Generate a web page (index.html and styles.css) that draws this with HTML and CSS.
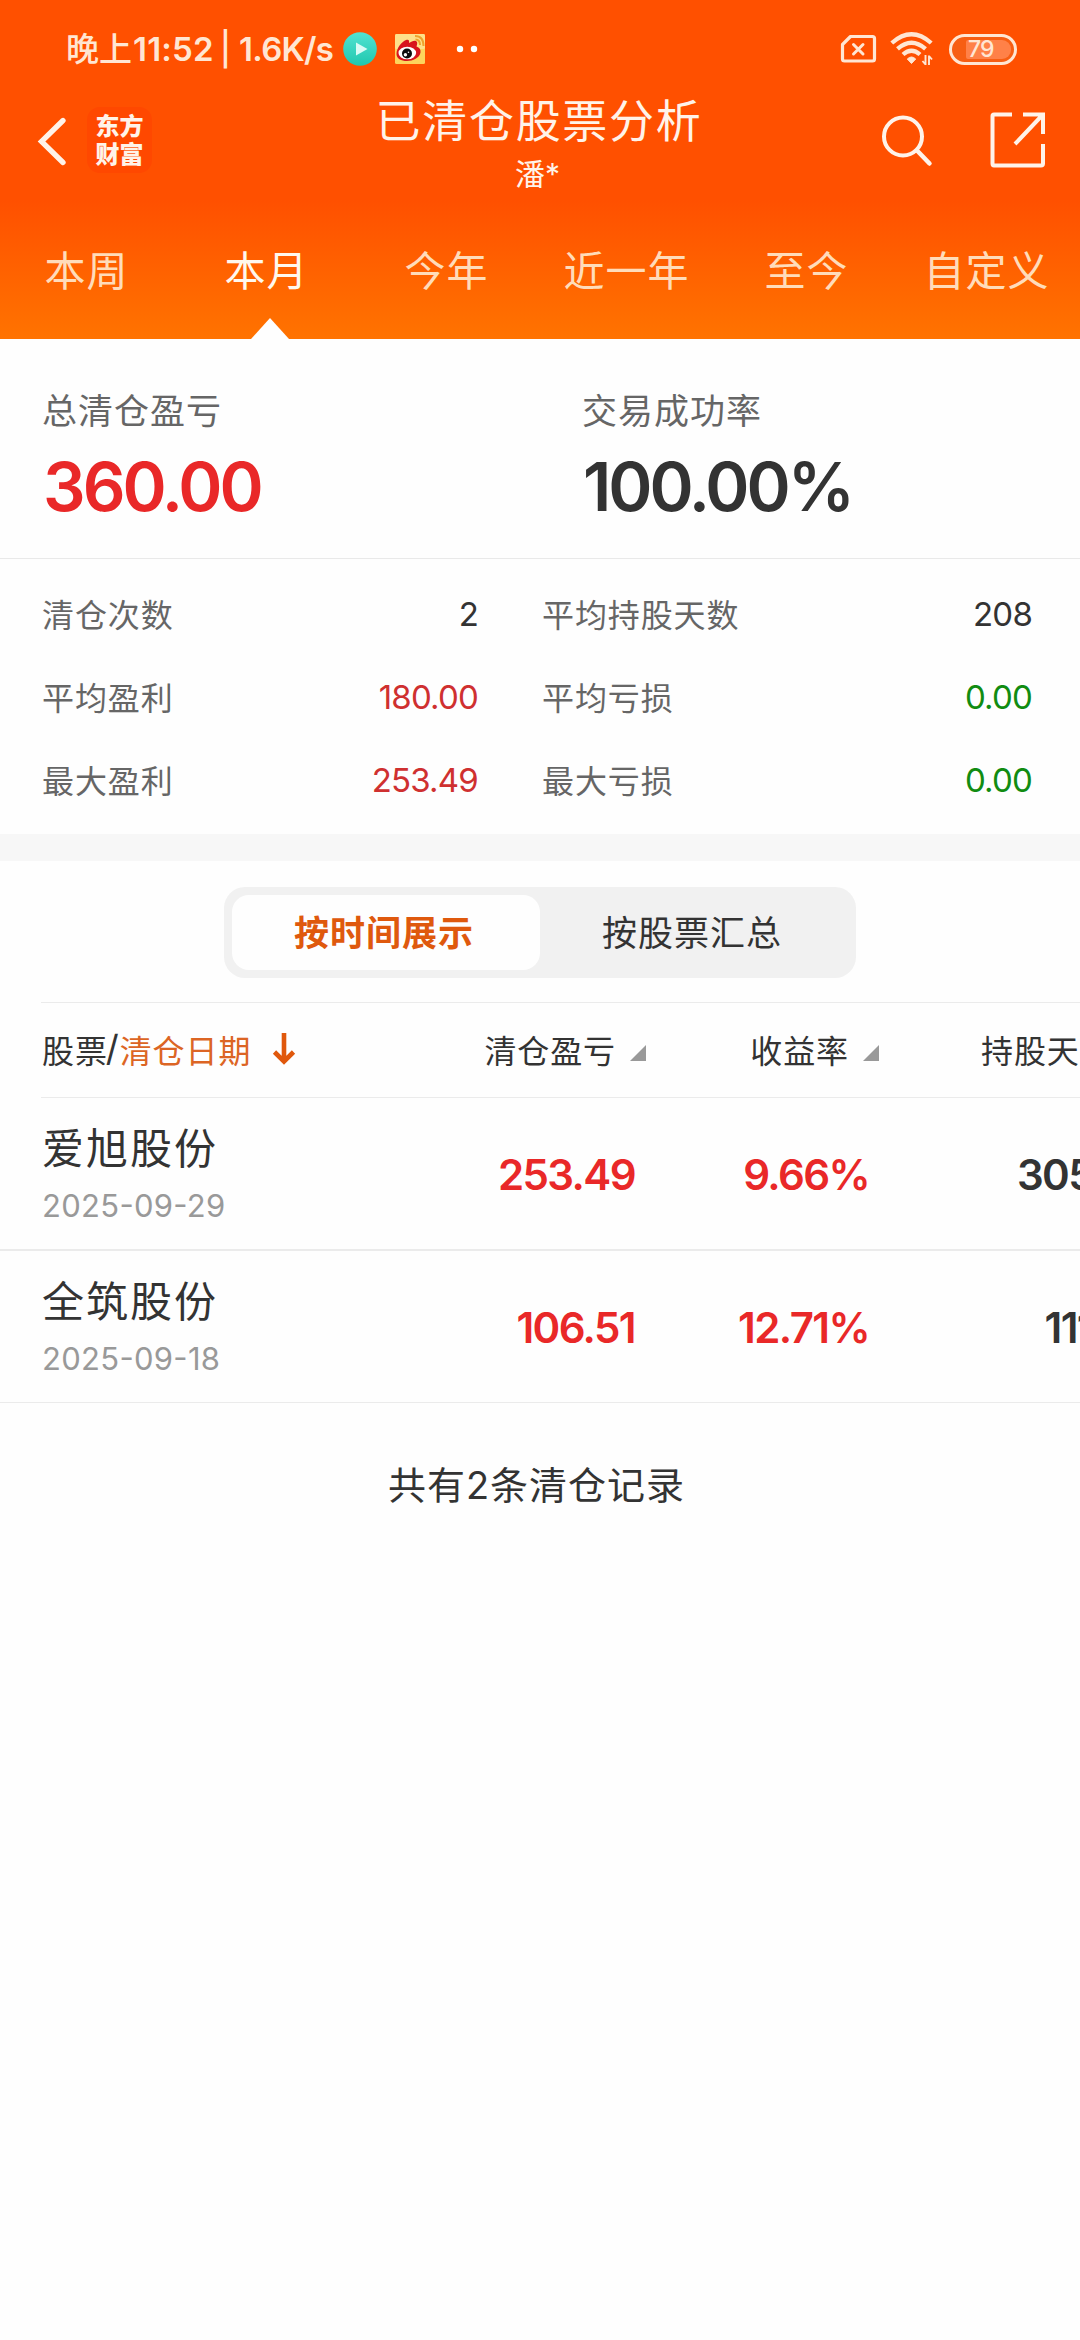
FILE: index.html
```html
<!DOCTYPE html>
<html lang="zh-CN">
<head>
<meta charset="utf-8">
<title>已清仓股票分析</title>
<link rel="stylesheet" href="styles.css">
</head>
<body>
<header class="header">
  <div class="status">
    <span class="status-text">晚上<b class="clock">11:52</b><b class="bar">|</b><b class="speed">1.6K/s</b></span>
    <svg class="play" width="34" height="34" viewBox="0 0 34 34"><defs><linearGradient id="pg" x1="0" y1="0" x2="0" y2="1"><stop offset="0" stop-color="#52e3d2"/><stop offset="1" stop-color="#1fc7ae"/></linearGradient></defs><circle cx="17" cy="17" r="16.8" fill="url(#pg)"/><path d="M13 10.500L24.500 17L13 23.500Z" fill="#d9fbf5"/></svg>
    <svg class="weibo" width="30" height="30" viewBox="0 0 30 30"><rect width="30" height="30" rx="1.500" fill="#fdd45c"/><rect width="30" height="15" rx="1.500" fill="#fee08a"/><path d="M1.500 20C1.500 14 7 7.500 11 6C13.500 5 14.500 6 14 9C17 7 20.500 5.500 22 8C22.500 9 22 11 21.500 12.500C24.500 13.500 26 15.500 25.500 18.500C24.500 24 18 27 12 27C6 27 1.500 24.500 1.500 20Z" fill="#d8141d"/><ellipse cx="12.300" cy="19" rx="8.800" ry="6.300" fill="#fff"/><circle cx="12" cy="19.500" r="5" fill="#0d0d0d"/><circle cx="10.400" cy="20.800" r="1.700" fill="#fff"/><circle cx="13.500" cy="18.300" r=".8" fill="#fff"/><path d="M20.500 5.500Q25 5.500 25 11M20 2Q28.500 2 28.500 12" fill="none" stroke="#eea22c" stroke-width="2"/></svg>
    <svg class="dots" width="22" height="8" viewBox="0 0 22 8"><circle cx="4" cy="4" r="3.200" fill="#fff"/><circle cx="18" cy="4" r="3.200" fill="#fff"/></svg>
    <svg class="sim" width="37" height="30" viewBox="0 0 37 30"><path d="M10.500 2.500H32.500Q34.500 2.500 34.500 4.500V25Q34.500 27 32.500 27H4.500Q2.500 27 2.500 25V10.500Z" fill="none" stroke="#ffe6d3" stroke-width="3.200" stroke-linejoin="round"/><path d="M13.500 10.500L23 20M23 10.500L13.500 20" stroke="#ffe6d3" stroke-width="3" stroke-linecap="round"/></svg>
    <svg class="wifi" width="44" height="34" viewBox="0 0 44 34"><g fill="none" stroke="#ffe6d3" stroke-width="4.300"><path d="M1.800 11Q21.500-6.500 41.200 11"/><path d="M7.500 16.800Q21.500 4.500 35.500 16.800"/><path d="M13 22.500Q21.500 15 30 22.500"/></g><path d="M17.300 27Q21.500 23 25.700 27L21.500 31.500Z" fill="#ffe6d3" stroke="#ffe6d3" stroke-linejoin="round"/><path d="M35.500 23V33M32.500 29L35.500 32.500M39 33V23.500M39 24L42 27.500" fill="none" stroke="#ffe6d3" stroke-width="1.900"/></svg>
    <span class="battery"><span class="charge">79</span></span>
  </div>
  <div class="titlebar">
    <svg class="back" width="30" height="50" viewBox="0 0 30 50"><path d="M26 4.500L4.500 25.500L26 46.500" fill="none" stroke="#fff3e9" stroke-width="5.300" stroke-linecap="round"/></svg>
    <div class="logo">东方<br>财富</div>
    <div class="heading"><h1>已清仓股票分析</h1><p>潘*</p></div>
    <svg class="search" width="52" height="54" viewBox="0 0 52 54"><circle cx="22" cy="22.500" r="19" fill="none" stroke="#fff3e9" stroke-width="4"/><path d="M36 36.500L48.500 49.500" stroke="#fff3e9" stroke-width="4.500" stroke-linecap="round"/></svg>
    <svg class="share" width="56" height="56" viewBox="0 0 56 56"><path d="M22 2.500H4Q2.500 2.500 2.500 4V51.500Q2.500 53.500 4 53.500H51Q53 53.500 53 51.500V32M33 2.500H53V22M52 3.500L25 32" fill="none" stroke="#fff3e9" stroke-width="4"/></svg>
  </div>
  <nav class="tabs"><a>本周</a><a class="active">本月</a><a>今年</a><a>近一年</a><a>至今</a><a>自定义</a></nav>
</header>
<main>
  <section class="summary">
    <div><p>总清仓盈亏</p><strong class="red">360.00</strong></div>
    <div><p>交易成功率</p><strong>100.00%</strong></div>
  </section>
  <section class="stats">
    <dl><dt>清仓次数</dt><dd>2</dd></dl><dl><dt>平均持股天数</dt><dd>208</dd></dl>
    <dl><dt>平均盈利</dt><dd class="loss">180.00</dd></dl><dl><dt>平均亏损</dt><dd class="green">0.00</dd></dl>
    <dl><dt>最大盈利</dt><dd class="loss">253.49</dd></dl><dl><dt>最大亏损</dt><dd class="green">0.00</dd></dl>
  </section>
  <div class="segmented"><span class="selected">按时间展示</span><span>按股票汇总</span></div>
  <section class="records">
    <div class="row head">
      <div class="first">股票<i>/</i><em>清仓日期</em><svg width="24" height="34" viewBox="0 0 24 34"><path d="M12 1V29M2.500 20L12 29.500L21.500 20" fill="none" stroke="#e0580c" stroke-width="4.600"/></svg></div>
      <div class="col">清仓盈亏<svg width="16" height="16" viewBox="0 0 16 16"><path d="M16 0V16H0Z" fill="#999"/></svg></div>
      <div class="col">收益率<svg width="16" height="16" viewBox="0 0 16 16"><path d="M16 0V16H0Z" fill="#999"/></svg></div>
      <div class="col days">持股天数</div>
    </div>
    <div class="row item">
      <div class="first"><h2>爱旭股份</h2><time>2025-09-29</time></div>
      <div class="col red">253.49</div><div class="col red">9.66%</div><div class="col">305</div>
    </div>
    <div class="row item">
      <div class="first"><h2>全筑股份</h2><time>2025-09-18</time></div>
      <div class="col red">106.51</div><div class="col red">12.71%</div><div class="col">111</div>
    </div>
  </section>
  <p class="total">共有<span>2</span>条清仓记录</p>
</main>
</body>
</html>
```
FILE: styles.css
```css
* { box-sizing: border-box; margin: 0; padding: 0; }
body {
  width: 1080px; height: 2340px; overflow: hidden;
  background: #fefefe; color: #333;
  font-family: Inter, "Noto Sans CJK SC", sans-serif;
}
svg { display: block; flex: none; }
i, em { font-style: normal; }

.header { height: 339px; background: linear-gradient(#ff5000 0, #ff5000 200px, #ff7300 339px); color: #fff3e9; }
.status { display: flex; align-items: center; height: 98px; padding-left: 66px; color: #ffe6d3; }
.status-text { display: flex; align-items: center; width: 277px; font-size: 33px; font-weight: 500; line-height: 40px; white-space: nowrap; }
.status-text b { font-weight: 600; letter-spacing: -.2px; }
.status-text .clock { margin-left: 1px; letter-spacing: .2px; }
.status-text .bar { margin: 0 8px 0 6px; font-weight: 500; }
.status-text .speed { letter-spacing: -.7px; }
.weibo { margin-left: 18px; }
.dots { margin-left: 31px; }
.sim { margin-left: 362px; }
.wifi { margin-left: 13px; }
.battery { display: flex; align-items: center; width: 68px; height: 31px; margin-left: 15px; padding-left: 14px; border: 3px solid #ffe6d3; border-radius: 16px; background: #f75e13; }
.charge { width: 45px; height: 19px; padding-left: 2px; border-radius: 2px 9px 9px 2px; background: #ff8148; font-size: 23px; line-height: 19px; font-weight: 500; letter-spacing: -1px; }

.titlebar { display: flex; align-items: flex-start; height: 107px; }
.back { margin: 18px 0 0 37px; }
.logo { width: 65px; height: 66px; margin: 9px 0 0 20px; padding-top: 4px; border-radius: 13px; background: #ff4800; text-align: center; font: 900 24px/28px "Noto Sans CJK SC", sans-serif; }
.heading { width: 328px; margin-left: 223px; text-align: center; white-space: nowrap; }
.heading h1 { font-size: 45px; font-weight: 400; line-height: 48px; letter-spacing: 1.7px; }
.heading p { padding-right: 3px; margin-top: 8px; font-size: 30px; line-height: 40px; }
.search { margin: 16px 0 0 178px; }
.share { margin: 14px 0 0 57px; }

.tabs { display: grid; grid-template-columns: repeat(6, 180px); height: 134px; }
.tabs a { position: relative; padding-right: 7px; text-align: center; font-size: 41px; line-height: 133px; letter-spacing: 1px; color: #ffdcba; }
.tabs .active { color: #fff8ee; }
.tabs .active::after { content: ""; position: absolute; left: 71px; bottom: 0; width: 38px; height: 21px; background: #fefefe; clip-path: polygon(50% 0, 100% 100%, 0 100%); }

.summary { display: grid; grid-template-columns: 540px 540px; height: 220px; border-bottom: 1px solid #e9e9e9; }
.summary div { padding: 47px 0 0 42px; }
.summary p { font-size: 35px; line-height: 50px; letter-spacing: 1px; color: #666; }
.summary strong { display: block; margin: 11px 0 0 1px; font-size: 67px; line-height: 80px; font-weight: 600; letter-spacing: -3px; }
.red { color: #e92828; }

.stats { display: grid; grid-template-columns: 500px 1fr; grid-auto-rows: 83px; height: 302px; padding: 14px 0 0 42px; border-bottom: 27px solid #f7f7f7; }
.stats dl { display: flex; justify-content: space-between; align-items: center; padding-right: 64px; }
.stats dl:nth-child(even) { padding-right: 48px; }
.stats dt { margin-top: -3px; font-size: 32px; letter-spacing: .9px; color: #666; }
.stats dd { margin-top: -1px; font-size: 33px; letter-spacing: -.8px; }
.stats .loss { color: #cf3030; }
.stats .green { color: #118c11; }

.segmented { display: flex; width: 632px; height: 91px; margin: 26px auto 0; padding: 8px; border-radius: 21px; background: #f1f1f1; }
.segmented span { flex: 1; padding-right: 4px; border-radius: 17px; text-align: center; font-size: 35px; line-height: 77px; letter-spacing: 1px; }
.segmented .selected { background: #fefefe; color: #df590d; font-weight: 700; }

.records { margin-top: 24px; overflow: hidden; }
.row { display: grid; grid-template-columns: 300px 293px 234px 224px; align-items: center; }
.col { text-align: right; }
.head { height: 96px; margin-left: 41px; border: solid #ebebeb; border-width: 1px 0; grid-template-columns: 300px 305px 233px 240px; font-size: 32px; letter-spacing: .9px; }
.head div { display: flex; align-items: center; padding-bottom: 2px; white-space: nowrap; }
.head .col { justify-content: flex-end; }
.head .col svg { margin: 7px 0 0 14px; }
.head .first { padding-left: 1px; }
.head .first svg { margin-left: 21px; }
.head i { font-size: 36px; font-weight: 400; margin: -2px 0 0 -2px; }
.head em { color: #dc6524; }
.head .days { justify-content: flex-start; padding-left: 102px; }
.item { height: 152px; padding-left: 42px; border-bottom: 1px solid #ebebeb; font-size: 42px; font-weight: 600; letter-spacing: -1.6px; }
.item:nth-child(2) { height: 153px; border-bottom-width: 2px; }
.item .col { padding-top: 2px; }
.item .first { padding-bottom: 3px; }
.item h2 { font-size: 42px; font-weight: 400; line-height: 60px; letter-spacing: 2px; }
.item time { display: block; margin-top: 7px; font-size: 31px; font-weight: 400; line-height: 40px; letter-spacing: .3px; color: #999; font-feature-settings: "case"; }
.total { margin-top: 57px; padding-right: 7px; text-align: center; font-size: 38px; line-height: 50px; letter-spacing: 1px; }
```
